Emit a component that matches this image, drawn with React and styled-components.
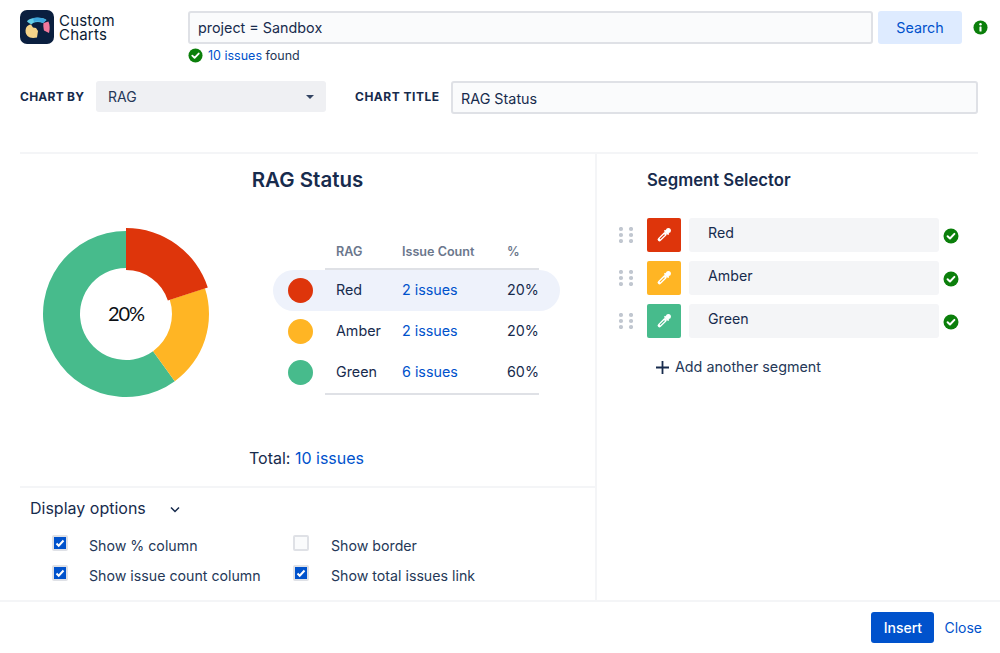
import React from "react";
import styled, { createGlobalStyle } from "styled-components";

const Global = createGlobalStyle`
  html, body { margin: 0; padding: 0; background: #fff; }
  body { font-family: Inter, "Liberation Sans", sans-serif; color: #172b4d; }
  * { box-sizing: border-box; }
`;

const Page = styled.div`
  width: 1000px; height: 653px; display: flex; flex-direction: column; overflow: hidden; background: #fff;
`;
const Top = styled.div`
  display: flex; align-items: flex-start; height: 81px; padding: 10px 0 0 20px;
`;
const Brand = styled.div`
  display: flex; align-items: center; width: 168px; gap: 5px;
`;
const BrandName = styled.div`
  font-size: 15px; line-height: 14px; color: #0b1a33; letter-spacing: 0.2px; padding-top: 1px;
`;
const SearchColumn = styled.div`
  display: flex; flex-direction: column; width: 685px; padding-top: 1px;
`;
const QueryInput = styled.div`
  height: 33px; border: 2px solid #dfe1e6; border-radius: 3px; background: #fafbfc;
  font-size: 14.35px; line-height: 29px; padding-left: 8px; color: #172b4d;
`;
const Found = styled.div`
  display: flex; align-items: center; gap: 5px; margin-top: 3px; font-size: 12.5px; line-height: 16px; color: #253858;
`;
const FoundText = styled.span`
  padding-top: 1px;
`;
const Link = styled.a`
  color: #0052cc; text-decoration: none;
`;
const SearchButton = styled.div`
  width: 84px; height: 33px; margin: 1px 0 0 5px; border-radius: 3px; background: #deebff; color: #0052cc;
  font-size: 14.3px; line-height: 33px; text-align: center;
`;
const InfoSlot = styled.div`
  margin: 10px 0 0 11px; height: 14px; display: flex;
`;
const FormRow = styled.div`
  display: flex; align-items: flex-start; height: 71px; padding-left: 20px;
`;
const FieldLabel = styled.div`
  font-size: 12px; font-weight: 700; letter-spacing: ${p => p.$ls}px; line-height: 32px; color: #172b4d; width: ${p => p.$w}px;
`;
const SelectBox = styled.div`
  display: flex; align-items: center; justify-content: space-between; width: 230px; height: 31px; margin-right: 29px;
  background: #eff0f3; border-radius: 3px; padding: 0 12px; font-size: 14px; color: #253858;
`;
const Caret = styled.span`
  width: 0; height: 0; border-left: 4px solid transparent; border-right: 4px solid transparent; border-top: 4px solid #344563;
`;
const TitleInput = styled.div`
  width: 527px; height: 33px; border: 2px solid #dfe1e6; border-radius: 3px; background: #fafbfc;
  font-size: 14.35px; line-height: 32px; padding-left: 8px; color: #172b4d;
`;
const Main = styled.div`
  display: flex; height: 448px; margin: 0 22px 0 20px; border-top: 2px solid #f4f5f7;
`;
const LeftPanel = styled.div`
  width: 575px; display: flex; flex-direction: column;
`;
const RightPanel = styled.div`
  flex: 1; border-left: 2px solid #f4f5f7; padding: 14px 0 0 22px;
`;
const ChartTitle = styled.div`
  font-size: 20.5px; font-weight: 600; line-height: 24px; color: #172b4d; text-align: center; padding-top: 14px;
`;
const ChartArea = styled.div`
  display: flex; align-items: flex-start; height: 240px; padding-left: 18px;
`;
const Donut = styled.svg`
  width: 176px; height: 176px; margin-top: 34px; flex: none;
`;
const CenterText = styled.text`
  font-family: Lato, "Open Sans", sans-serif; font-size: 20px; letter-spacing: -1px; fill: #0b0f14; text-anchor: middle;
`;
const TableWrap = styled.div`
  width: 287px; margin: 45px 0 0 59px; display: flex; flex-direction: column;
`;
const HeadRow = styled.div`
  display: grid; grid-template-columns: 66px 105px 43px; width: 214px; margin-left: 52px; padding-left: 11px;
  height: 33px; line-height: 30px; border-bottom: 2px solid #dfe1e6;
  font-size: 12.6px; font-weight: 600; color: #6b778c;
`;
const DataRow = styled.div`
  display: flex; align-items: center; height: 41px;
  border-radius: 21px; background: ${p => p.$active ? "#eef2fb" : "transparent"};
  font-size: 14.3px; color: #172b4d;
`;
const Dot = styled.span`
  width: 25px; height: 25px; border-radius: 50%; margin: 0 12px 0 15px; background: ${p => p.$c}; flex: none;
`;
const Cells = styled.div`
  display: grid; grid-template-columns: 66px 105px 38px; width: 214px; padding-left: 11px; margin-top: -3px;
`;
const Rule = styled.div`
  width: 214px; height: 2px; margin-left: 52px; background: #dfe1e6;
`;
const Total = styled.div`
  font-size: 16px; line-height: 22px; text-align: center; color: #172b4d; height: 54px; padding: 15px 2px 0 0;
`;
const Options = styled.div`
  border-top: 2px solid #f4f5f7; padding: 9px 0 0 10px; flex: 1;
`;
const OptionsHead = styled.div`
  display: flex; align-items: center; font-size: 16px; line-height: 22px; color: #172b4d; height: 22px;
`;
const Chevron = styled.svg`
  width: 10px; height: 7px; margin-left: 24px; margin-top: 2px;
`;
const OptGrid = styled.div`
  display: grid; grid-template-columns: 241px 1fr; grid-auto-rows: 30px; margin: 11px 0 0 22px;
`;
const Option = styled.div`
  display: flex; align-items: center; height: 30px; font-size: 14.2px; color: #253858;
`;
const Box = styled.span`
  width: 16px; height: 16px; margin-top: -5px; border-radius: 2px; flex: none;
  border: 2px solid #dfe1e6;
  background: ${p => p.$on ? "#0052cc" : "#fafbfc"};
  display: flex; align-items: center; justify-content: center;
`;
const OptionLabel = styled.span`
  margin-left: ${p => p.$gap}px;
`;
const PanelTitle = styled.div`
  font-size: 16.7px; font-weight: 600; line-height: 24px; color: #172b4d; padding-left: 28px; margin-bottom: 26px;
`;
const Segment = styled.div`
  display: flex; align-items: flex-start; height: 43px;
`;
const Grip = styled.svg`
  width: 14px; height: 16px; margin-top: 9px; margin-right: 14px; flex: none;
`;
const Swatch = styled.div`
  width: 34px; height: 34px; border-radius: 2px; background: ${p => p.$c};
  display: flex; align-items: center; justify-content: center; margin-right: 8px; flex: none;
`;
const SegName = styled.div`
  width: 250px; height: 34px; background: #f4f5f7; border-radius: 3px; padding-left: 19px; font-size: 14.2px; line-height: 30px; color: #172b4d;
`;
const CheckSlot = styled.div`
  margin: 10px 0 0 4px; display: flex;
`;
const AddRow = styled.div`
  display: flex; align-items: center; gap: 6px; padding-left: 37px; margin-top: 10px; font-size: 14.3px; line-height: 20px; color: #253858;
`;
const Footer = styled.div`
  display: flex; align-items: center; justify-content: flex-end; flex: 1; border-top: 2px solid #f4f5f7; padding-right: 18px; gap: 10px;
`;
const Insert = styled.div`
  width: 63px; height: 31px; background: #0052cc; color: #fff; border-radius: 3px; font-size: 14px; line-height: 31px; text-align: center; font-weight: 500;
`;
const Close = styled(Link)`
  font-size: 14px;
`;

const polar = (r, deg, cx = 88, cy = 88) => {
  const a = (deg * Math.PI) / 180;
  return [cx + r * Math.sin(a), cy - r * Math.cos(a)];
};
const arc = (ro, ri, a, b) => {
  const [x1, y1] = polar(ro, a);
  const [x2, y2] = polar(ro, b);
  const [x3, y3] = polar(ri, b);
  const [x4, y4] = polar(ri, a);
  const large = b - a > 180 ? 1 : 0;
  return `M${x1} ${y1}A${ro} ${ro} 0 ${large} 1 ${x2} ${y2}L${x3} ${y3}A${ri} ${ri} 0 ${large} 0 ${x4} ${y4}Z`;
};

const RED = "#de350b";
const AMBER = "#ffb524";
const GREEN = "#47bb8c";

const Check = ({ size = 16, fill = "#0b7f0b" }) => (
  <svg width={size} height={size} viewBox="0 0 16 16">
    <circle cx="8" cy="8" r="7.5" fill={fill} />
    <path d="M4.6 8.2l2.4 2.3 4.4-4.6" fill="none" stroke="#fff" strokeWidth="2" strokeLinecap="round" strokeLinejoin="round" />
  </svg>
);

const Logo = () => (
  <svg width="34" height="34" viewBox="0 0 34 34">
    <rect width="34" height="34" rx="7" fill="#0a1f3f" />
    <path d="M7 11.500C8 7.500 23 6 26.500 10l-3.500 3c-3.500-1.500-7-1.500-10 0l-1.500 1.500c-2 -1-3.500-2-4.500-3z" fill="#63cde6" />
    <path d="M13 8c4-1 9-.8 13.500 2l-3.500 3c-3-1.500-6-1.700-9-1z" fill="#3ea6dc" />
    <path d="M23.500 13l5-1.500c1.500 3.500 1.500 7.500.5 11.500l-5-2.500c-.5-2.500-1-5-.5-7.500z" fill="#f2789b" />
    <path d="M6 18c1-2 3-3.500 5-3.500l2 3 3 .5 2 3-1 6.500c-4 1-7.500.5-9.500-1.500C5.500 24 5 21 6 18z" fill="#f5d48a" />
  </svg>
);

const Tick = () => (
  <svg width="10" height="10" viewBox="0 0 10 10">
    <path d="M1.500 5.500l2.200 2.200 4.800-5.200" fill="none" stroke="#fff" strokeWidth="2" />
  </svg>
);

const Dropper = ({ c }) => (
  <svg width="18" height="18" viewBox="0 0 18 18">
    <circle cx="13.400" cy="4.600" r="2.500" fill="#fff" />
    <path d="M10.100 4.900l3 3" stroke="#fff" strokeWidth="2" strokeLinecap="round" />
    <path d="M9.900 8.100L4.500 13.500" stroke="#fff" strokeWidth="3.800" strokeLinecap="round" />
    <path d="M9.200 8.800L5.300 12.700" stroke={c} strokeWidth="1.100" strokeLinecap="round" />
  </svg>
);

const GripDots = () => (
  <Grip viewBox="0 0 14 16">
    {[2, 8, 14].flatMap(y => [1, 11].map(x => <circle key={`${x}-${y}`} cx={x + 1} cy={y} r="2.100" fill="#c1c7d0" />))}
  </Grip>
);

const rows = [
  { n: "Red", c: RED, i: "2 issues", p: "20%", active: true },
  { n: "Amber", c: AMBER, i: "2 issues", p: "20%" },
  { n: "Green", c: GREEN, i: "6 issues", p: "60%" },
];

const Opt = ({ on, gap, children }) => (
  <Option>
    <Box $on={on}>{on && <Tick />}</Box>
    <OptionLabel $gap={gap}>{children}</OptionLabel>
  </Option>
);

export default function App() {
  return (
    <Page>
      <Global />
      <Top>
        <Brand>
          <Logo />
          <BrandName>Custom<br />Charts</BrandName>
        </Brand>
        <SearchColumn>
          <QueryInput>project = Sandbox</QueryInput>
          <Found><Check size={15} /><FoundText><Link>10 issues</Link> found</FoundText></Found>
        </SearchColumn>
        <SearchButton>Search</SearchButton>
        <InfoSlot>
          <svg width="15" height="15" viewBox="0 0 16 16">
            <circle cx="8" cy="8" r="7.500" fill="#0b7f0b" />
            <circle cx="8" cy="4.500" r="1.300" fill="#fff" />
            <rect x="6.900" y="6.800" width="2.200" height="5.500" rx=".6" fill="#fff" />
          </svg>
        </InfoSlot>
      </Top>
      <FormRow>
        <FieldLabel $w={76} $ls={0.25}>CHART BY</FieldLabel>
        <SelectBox>RAG<Caret /></SelectBox>
        <FieldLabel $w={96} $ls={0.5}>CHART TITLE</FieldLabel>
        <TitleInput>RAG Status</TitleInput>
      </FormRow>
      <Main>
        <LeftPanel>
          <ChartTitle>RAG Status</ChartTitle>
          <ChartArea>
            <Donut viewBox="0 0 176 176">
              <path d={arc(83, 46, 144, 360)} fill={GREEN} />
              <path d={arc(83, 46, 72, 144)} fill={AMBER} />
              <path d={arc(86, 44, 0, 72)} fill={RED} />
              <CenterText x="88" y="95">20%</CenterText>
            </Donut>
            <TableWrap>
              <HeadRow><span>RAG</span><span>Issue Count</span><span>%</span></HeadRow>
              {rows.map(r => (
                <DataRow key={r.n} $active={r.active}>
                  <Dot $c={r.c} />
                  <Cells>
                    <span>{r.n}</span>
                    <Link>{r.i}</Link>
                    <span>{r.p}</span>
                  </Cells>
                </DataRow>
              ))}
              <Rule />
            </TableWrap>
          </ChartArea>
          <Total>Total: <Link>10 issues</Link></Total>
          <Options>
            <OptionsHead>
              Display options
              <Chevron viewBox="0 0 10 7"><path d="M1 1.500l4 4 4-4" fill="none" stroke="#172b4d" strokeWidth="1.500" /></Chevron>
            </OptionsHead>
            <OptGrid>
              <Opt on gap={21}>Show % column</Opt>
              <Opt gap={22}>Show border</Opt>
              <Opt on gap={21}>Show issue count column</Opt>
              <Opt on gap={22}>Show total issues link</Opt>
            </OptGrid>
          </Options>
        </LeftPanel>
        <RightPanel>
          <PanelTitle>Segment Selector</PanelTitle>
          {rows.map(r => (
            <Segment key={r.n}>
              <GripDots />
              <Swatch $c={r.c}><Dropper c={r.c} /></Swatch>
              <SegName>{r.n}</SegName>
              <CheckSlot><Check size={16} /></CheckSlot>
            </Segment>
          ))}
          <AddRow>
            <svg width="13" height="13" viewBox="0 0 13 13"><path d="M6.500 0v13M0 6.500h13" stroke="#172b4d" strokeWidth="1.800" /></svg>
            Add another segment
          </AddRow>
        </RightPanel>
      </Main>
      <Footer>
        <Insert>Insert</Insert>
        <Close>Close</Close>
      </Footer>
    </Page>
  );
}
